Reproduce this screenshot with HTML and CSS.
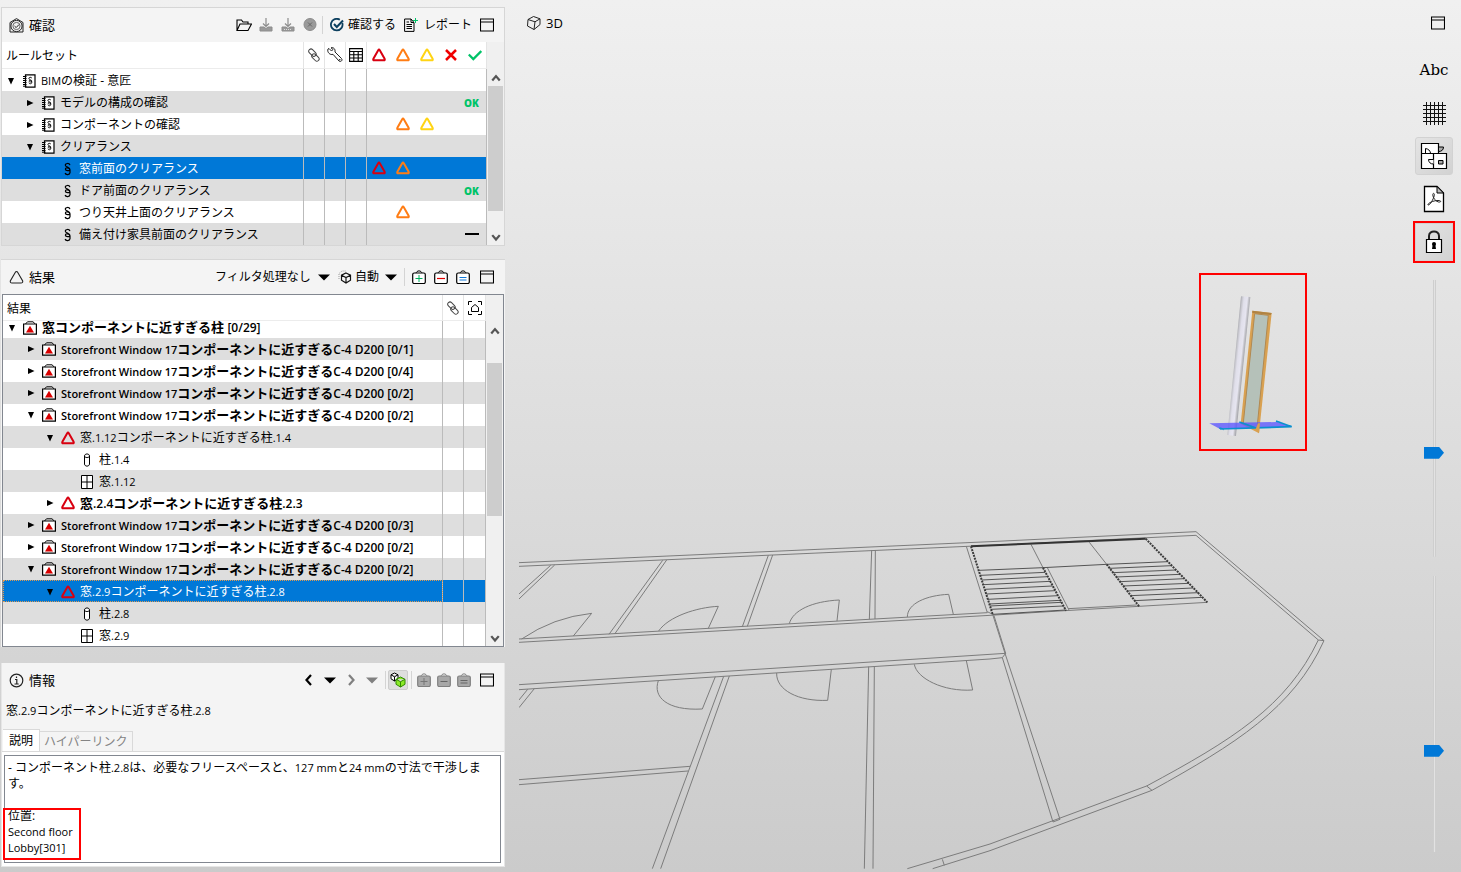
FILE: index.html
```html
<!DOCTYPE html>
<html lang="ja">
<head>
<meta charset="utf-8">
<title>BIMの検証</title>
<link rel="stylesheet" href="styles.css">
</head>
<body>
<svg class="defs" aria-hidden="true">
  <symbol id="tri" viewBox="0 0 14 14"><path d="M6.2 2.2Q7 1 7.8 2.2L12.6 10.8Q13.200 12.300 11.800 12.300H2.200Q.8 12.300 1.400 10.800Z" fill="none" stroke="currentColor" stroke-width="2"/></symbol>
  <symbol id="book" viewBox="0 0 14 14"><path d="M3.500 .8h9.500v12.400H3.500z" fill="#fff" stroke="#000" stroke-width="1.200"/><path d="M1 2.500h3.500M1 4.500h3.500M1 6.500h3.500M1 8.500h3.500M1 10.500h3.500M1 12.200h3.500" stroke="#000"/><path d="M9.900 4.200C9.300 2.800 6.700 3.100 6.900 4.700c.2 1.200 3 1 3 2.500 0 1.100-2.900 1-2.900-.1 0-1.100 2.600-.8 2.800 1.100.300 1.900-2.500 2-3 .6" fill="none" stroke="#000" stroke-width=".9"/></symbol>
  <symbol id="para" viewBox="0 0 14 14"><path d="M10 3.200C9.300.8 5.200 1 5.300 3.200c.1 2 4.800 2 4.700 4.300-.1 1.700-4.500 1.500-4.600-.4C5.300 5 9.800 5.600 10 8c0 .2 0 1.800 0 2.600-.2 2.500-4.300 2.700-4.900.4" fill="none" stroke="currentColor" stroke-width="1.200"/></symbol>
  <symbol id="case" viewBox="0 0 14 14"><path d="M2.500 3L4.500 .800h5.500L12.300 3" fill="none" stroke="#000"/><path d="M.600 3h12.800v10.200H.600z" fill="#fff" stroke="#000" stroke-width="1.200"/><path d="M7 4.800l4 6.700H3z" fill="#d80000"/></symbol>
  <symbol id="column" viewBox="0 0 14 14"><path d="M4.500 3v8c0 2.800 5 2.800 5 0V3c0-2.700-5-2.700-5 0c0 2 5 2 5 0" fill="#fff" stroke="#000"/></symbol>
  <symbol id="pane" viewBox="0 0 14 14"><path d="M1.500 .5h11v13h-11zM7 .5v13M1.500 7h11" fill="#fff" stroke="#000"/></symbol>
  <symbol id="win" viewBox="0 0 14 14"><path d="M.5 1h13v12H.5zM.5 4h13" fill="none" stroke="#000" stroke-width="1.100"/></symbol>
  <symbol id="link" viewBox="0 0 14 14"><g fill="none" stroke="#444" transform="rotate(45 7 7)"><rect x="0" y="4.200" width="8.500" height="4.500" rx="2.200"/><rect x="5.500" y="5.500" width="8.500" height="4.500" rx="2.200"/></g></symbol>
  <symbol id="caret" viewBox="0 0 12 7"><path d="M0 .5h12L6 6.500z" fill="currentColor"/></symbol>
  <symbol id="down" viewBox="0 0 8 8"><path d="M1 1h6L4 7.500z"/></symbol>
  <symbol id="right" viewBox="0 0 8 8"><path d="M1 1l6.500 3L1 7z"/></symbol>
  <symbol id="bag" viewBox="0 0 14 14"><path d="M4 3.500C4.500 0 9.500 0 10 3.500" fill="none" stroke="currentColor"/><rect x=".7" y="3" width="12.600" height="10.500" rx="1.500" fill="var(--fill,#fff)" stroke="currentColor" stroke-width="1.200"/></symbol>
  <symbol id="up-arrow" viewBox="0 0 8 8"><path d="M1 6l3-3.500L7 6" fill="none" stroke="#555" stroke-width="1.800"/></symbol>
  <symbol id="down-arrow" viewBox="0 0 8 8"><path d="M1 2.500L4 6l3-3.500" fill="none" stroke="#555" stroke-width="1.800"/></symbol>
</svg>

<div class="app">
<aside class="sidebar">

<section class="panel check-panel">
  <header class="bar">
    <svg class="i15" viewBox="0 0 15 15"><path d="M1 14V4.500L7.500 .600 14 4.500V14z" fill="none" stroke="#222"/><circle cx="7.500" cy="8" r="5.600" fill="#f4f4f4" stroke="#222"/><circle cx="7.500" cy="8" r="3.600" fill="none" stroke="#444" stroke-width=".8"/><path d="M5.500 8l1.700 1.600L10 6.500" fill="none" stroke="#222"/></svg>
    <h2>確認</h2>
    <div class="tools">
      <button class="tb" aria-label="開く"><svg class="i16" viewBox="0 0 16 16"><path d="M1 13.500V3h4.500l1.500 2h5v2M1 13.500L4 7h11.500l-3.500 6.500z" fill="none" stroke="#000" stroke-width="1.100"/></svg></button>
      <button class="tb dim" aria-label="追加"><svg class="i14" viewBox="0 0 14 14"><path d="M7 0v8M4 5.500L7 8.500l3-3" fill="none" stroke="#8c8c8c" stroke-width="1.200"/><path d="M1 9h4l2 1.500L9 9h4v4H1z" fill="#9a9a9a" stroke="#8c8c8c"/></svg></button>
      <button class="tb dim" aria-label="一括追加"><svg class="i14" viewBox="0 0 14 14"><path d="M7 0v8M4 5.500L7 8.500l3-3" fill="none" stroke="#8c8c8c" stroke-width="1.200"/><path d="M1 9h4l2 1.500L9 9h4v4H1z" fill="#9a9a9a" stroke="#8c8c8c"/><path d="M3 11.500h8" stroke="#ddd" stroke-dasharray="1 1"/></svg></button>
      <button class="tb dim" aria-label="削除"><svg class="i14" viewBox="0 0 14 14"><circle cx="7" cy="6.500" r="6" fill="#9a9a9a" stroke="#8c8c8c"/><path d="M5 4.500l4 4M9 4.500l-4 4" stroke="#666"/></svg></button>
      <span class="sep wide"></span>
      <button class="tx"><svg class="i14" viewBox="0 0 14 14"><path d="M12.300 5A5.800 5.800 0 1 1 9.800 1.700" fill="none" stroke="#0d405f" stroke-width="1.800"/><path d="M4 6l2.800 3L13 2.500" fill="none" stroke="#0d405f" stroke-width="2"/></svg>確認する</button>
      <button class="tx report"><svg class="i14" viewBox="0 0 14 14"><path d="M7 1H.600v12.400h9.400V5M7 1L10 4.500H7zM2.500 4h2.500M2.500 6.500h5.500M2.500 8.500h5.500M2.500 10.500h5.500" fill="none" stroke="#000"/><path d="M11.500 0v5M9 2.500h5" stroke="#00c368"/></svg>レポート</button>
      <button class="tb" aria-label="最大化"><svg class="i14"><use href="#win"/></svg></button>
    </div>
  </header>
  <div class="scroller">
  <table class="tree rules">
    <colgroup><col><col class="c21"><col class="c21"><col class="c21"><col class="c24"><col class="c24"><col class="c24"><col class="c24"><col class="c24"></colgroup>
    <thead><tr><th class="name" scope="col">ルールセット</th>
      <th><svg class="i14"><use href="#link"/></svg></th>
      <th><svg class="i16" viewBox="0 0 16 16"><path d="M2 1.500l2.500 2.500 1.500-1.500L4 .8C6.500 0 8.500 2 8 5l6.500 6.500c1.500 1.800-.8 4-2.500 2.500L6 7.300C3 8.500-.2 5 1 2z" fill="#fff" stroke="#222"/><circle cx="12.800" cy="12.800" r=".7"/></svg></th>
      <th><svg class="i14" viewBox="0 0 14 14"><path d="M.6.6h12.800v12.800H.6zM.6 3.500h12.800M.6 6.700h12.800M.6 10h12.800M4.800 3.500v10M9.200 3.500v10" fill="none" stroke="#000" stroke-width="1.100"/></svg></th>
      <th class="red"><svg class="i14"><use href="#tri"/></svg></th><th class="orange"><svg class="i14"><use href="#tri"/></svg></th><th class="yellow"><svg class="i14"><use href="#tri"/></svg></th>
      <th><svg class="i14" viewBox="0 0 14 14"><path d="M2 2l10 10M12 2L2 12" stroke="#f00000" stroke-width="2.500"/></svg></th>
      <th><svg class="i14" viewBox="0 0 14 14"><path d="M.8 6.500l4.500 4.500 8-8" fill="none" stroke="#00c368" stroke-width="2.300"/></svg></th></tr></thead>
    <tbody>
    <tr><td><div class="cell"><svg class="arw"><use href="#down"/></svg><svg class="i14"><use href="#book"/></svg><span><span class="en">BIM</span>の検証 - 意匠</span></div></td><td></td><td></td><td></td><td></td><td></td><td></td><td></td><td></td></tr>
    <tr><td><div class="cell lv1"><svg class="arw"><use href="#right"/></svg><svg class="i14"><use href="#book"/></svg>モデルの構成の確認</div></td><td></td><td></td><td></td><td></td><td></td><td></td><td></td><td class="ok">OK</td></tr>
    <tr><td><div class="cell lv1"><svg class="arw"><use href="#right"/></svg><svg class="i14"><use href="#book"/></svg>コンポーネントの確認</div></td><td></td><td></td><td></td><td></td><td class="orange"><svg class="i14"><use href="#tri"/></svg></td><td class="yellow"><svg class="i14"><use href="#tri"/></svg></td><td></td><td></td></tr>
    <tr><td><div class="cell lv1"><svg class="arw"><use href="#down"/></svg><svg class="i14"><use href="#book"/></svg>クリアランス</div></td><td></td><td></td><td></td><td></td><td></td><td></td><td></td><td></td></tr>
    <tr class="selected"><td><div class="cell lv2"><span class="arw"></span><svg class="i14 ink"><use href="#para"/></svg>窓前面のクリアランス</div></td><td></td><td></td><td></td><td class="red"><svg class="i14"><use href="#tri"/></svg></td><td class="orange"><svg class="i14"><use href="#tri"/></svg></td><td></td><td></td><td></td></tr>
    <tr><td><div class="cell lv2"><span class="arw"></span><svg class="i14 ink"><use href="#para"/></svg>ドア前面のクリアランス</div></td><td></td><td></td><td></td><td></td><td></td><td></td><td></td><td class="ok">OK</td></tr>
    <tr><td><div class="cell lv2"><span class="arw"></span><svg class="i14 ink"><use href="#para"/></svg>つり天井上面のクリアランス</div></td><td></td><td></td><td></td><td></td><td class="orange"><svg class="i14"><use href="#tri"/></svg></td><td></td><td></td><td></td></tr>
    <tr><td><div class="cell lv2"><span class="arw"></span><svg class="i14 ink"><use href="#para"/></svg>備え付け家具前面のクリアランス</div></td><td></td><td></td><td></td><td></td><td></td><td></td><td></td><td class="dash"><svg class="i14" viewBox="0 0 14 14"><path d="M0 7h14" stroke="#000" stroke-width="2"/></svg></td></tr>
    </tbody>
  </table>
  <div class="sb"><button aria-label="上へ"><svg class="i8"><use href="#up-arrow"/></svg></button><span class="thumb"></span><button aria-label="下へ"><svg class="i8"><use href="#down-arrow"/></svg></button></div>
  </div>
</section>

<section class="panel result-panel">
  <header class="bar">
    <svg class="i15" viewBox="0 0 15 15"><path d="M6.500 2Q7.500 1 8.500 2L13.700 11Q14 13 12 13H3Q1 13 1.300 11Z" fill="none" stroke="#222" stroke-width="1.100"/></svg>
    <h2>結果</h2>
    <div class="tools">
      <label class="drop"><select aria-label="フィルタ"><option>フィルタ処理なし</option></select><svg class="caret"><use href="#caret"/></svg></label>
      <label class="drop auto"><svg class="i14" viewBox="0 0 14 14"><path d="M1 9V3.500L4 1h4" fill="none" stroke="#999" stroke-dasharray="1 1"/><path d="M8 3l4.500 2.200v5L8 13l-4.500-2.800v-5zM3.500 5.200L8 7.500l4.500-2.300M8 7.500V13" fill="none" stroke="#111" stroke-width="1.200"/></svg><select aria-label="表示"><option>自動</option></select><svg class="caret"><use href="#caret"/></svg></label>
      <span class="sep tight"></span>
      <button class="tb" aria-label="追加"><svg class="i14" viewBox="0 0 14 14"><use href="#bag"/><path d="M3.500 8.500h7M7 5v7" stroke="#00b060"/></svg></button>
      <button class="tb" aria-label="除外"><svg class="i14" viewBox="0 0 14 14"><use href="#bag"/><path d="M3 8.500h8" stroke="#e00000" stroke-width="1.200"/></svg></button>
      <button class="tb bag-last" aria-label="設定"><svg class="i14" viewBox="0 0 14 14"><use href="#bag"/><path d="M3.500 7.500h7M3.500 10h7" stroke="#1078d8"/></svg></button>
      <button class="tb" aria-label="最大化"><svg class="i14"><use href="#win"/></svg></button>
    </div>
  </header>
  <div class="scroller framed">
  <table class="tree results">
    <colgroup><col><col class="c21"><col class="c22"></colgroup>
    <thead><tr><th class="name" scope="col">結果</th><th><svg class="i14"><use href="#link"/></svg></th><th><svg class="i14" viewBox="0 0 14 14"><path d="M.5 4V.5H4M10 .5h3.500V4M13.500 10v3.500H10M4 13.500H.5V10M3.500 10.500v-4L7 3.500l3.500 3v4z" fill="none" stroke="#000"/></svg></th></tr></thead>
    <tbody>
    <tr class="cut"><td><div class="cell bold"><svg class="arw"><use href="#down"/></svg><svg class="i14"><use href="#case"/></svg><span>窓コンポーネントに近すぎる柱 <span class="tag">[0/29]</span></span></div></td><td></td><td></td></tr>
    <tr><td><div class="cell lv1 bold"><svg class="arw"><use href="#right"/></svg><svg class="i14"><use href="#case"/></svg><span><span class="en">Storefront Window 17</span>コンポーネントに近すぎる<span class="tag">C-4 D200 [0/1]</span></span></div></td><td></td><td></td></tr>
    <tr><td><div class="cell lv1 bold"><svg class="arw"><use href="#right"/></svg><svg class="i14"><use href="#case"/></svg><span><span class="en">Storefront Window 17</span>コンポーネントに近すぎる<span class="tag">C-4 D200 [0/4]</span></span></div></td><td></td><td></td></tr>
    <tr><td><div class="cell lv1 bold"><svg class="arw"><use href="#right"/></svg><svg class="i14"><use href="#case"/></svg><span><span class="en">Storefront Window 17</span>コンポーネントに近すぎる<span class="tag">C-4 D200 [0/2]</span></span></div></td><td></td><td></td></tr>
    <tr><td><div class="cell lv1 bold"><svg class="arw"><use href="#down"/></svg><svg class="i14"><use href="#case"/></svg><span><span class="en">Storefront Window 17</span>コンポーネントに近すぎる<span class="tag">C-4 D200 [0/2]</span></span></div></td><td></td><td></td></tr>
    <tr><td><div class="cell lv2"><svg class="arw"><use href="#down"/></svg><svg class="i14 red"><use href="#tri"/></svg><span>窓<span class="en">.1.12</span>コンポーネントに近すぎる柱<span class="en">.1.4</span></span></div></td><td></td><td></td></tr>
    <tr><td><div class="cell lv3"><span class="arw"></span><svg class="i14"><use href="#column"/></svg><span>柱<span class="en">.1.4</span></span></div></td><td></td><td></td></tr>
    <tr><td><div class="cell lv3"><span class="arw"></span><svg class="i14"><use href="#pane"/></svg><span>窓<span class="en">.1.12</span></span></div></td><td></td><td></td></tr>
    <tr><td><div class="cell lv2 bold"><svg class="arw"><use href="#right"/></svg><svg class="i14 red"><use href="#tri"/></svg><span>窓<span class="tag">.2.4</span>コンポーネントに近すぎる柱<span class="tag">.2.3</span></span></div></td><td></td><td></td></tr>
    <tr><td><div class="cell lv1 bold"><svg class="arw"><use href="#right"/></svg><svg class="i14"><use href="#case"/></svg><span><span class="en">Storefront Window 17</span>コンポーネントに近すぎる<span class="tag">C-4 D200 [0/3]</span></span></div></td><td></td><td></td></tr>
    <tr><td><div class="cell lv1 bold"><svg class="arw"><use href="#right"/></svg><svg class="i14"><use href="#case"/></svg><span><span class="en">Storefront Window 17</span>コンポーネントに近すぎる<span class="tag">C-4 D200 [0/2]</span></span></div></td><td></td><td></td></tr>
    <tr><td><div class="cell lv1 bold"><svg class="arw"><use href="#down"/></svg><svg class="i14"><use href="#case"/></svg><span><span class="en">Storefront Window 17</span>コンポーネントに近すぎる<span class="tag">C-4 D200 [0/2]</span></span></div></td><td></td><td></td></tr>
    <tr class="selected focus"><td><div class="cell lv2"><svg class="arw"><use href="#down"/></svg><svg class="i14 red"><use href="#tri"/></svg><span>窓<span class="en">.2.9</span>コンポーネントに近すぎる柱<span class="en">.2.8</span></span></div></td><td></td><td></td></tr>
    <tr class="alt"><td><div class="cell lv3"><span class="arw"></span><svg class="i14"><use href="#column"/></svg><span>柱<span class="en">.2.8</span></span></div></td><td></td><td></td></tr>
    <tr><td><div class="cell lv3"><span class="arw"></span><svg class="i14"><use href="#pane"/></svg><span>窓<span class="en">.2.9</span></span></div></td><td></td><td></td></tr>
    </tbody>
  </table>
  <div class="sb"><button aria-label="上へ"><svg class="i8"><use href="#up-arrow"/></svg></button><span class="thumb mid"></span><button aria-label="下へ"><svg class="i8"><use href="#down-arrow"/></svg></button></div>
  </div>
</section>

<section class="panel info-panel">
  <header class="bar">
    <svg class="i15" viewBox="0 0 15 15"><circle cx="7.500" cy="7.500" r="6.300" fill="none" stroke="#222" stroke-width="1.200"/><path d="M6 6.500h1.800V11M5.500 11h4.200M7.500 3.500v1.500" fill="none" stroke="#222" stroke-width="1.200"/></svg>
    <h2>情報</h2>
    <div class="tools">
      <button class="nav" aria-label="戻る"><svg class="i12" viewBox="0 0 12 12"><path d="M8 1L3.500 6 8 11" fill="none" stroke="#000" stroke-width="2.200"/></svg></button>
      <button class="nav" aria-label="履歴"><svg class="caret"><use href="#caret"/></svg></button>
      <button class="nav dim" aria-label="進む"><svg class="i12" viewBox="0 0 12 12"><path d="M4 1l4.500 5L4 11" fill="none" stroke="#808080" stroke-width="2.200"/></svg></button>
      <button class="nav dim" aria-label="次の履歴"><svg class="caret"><use href="#caret"/></svg></button>
      <span class="sep thin"></span>
      <button class="toggle" aria-label="選択" aria-pressed="true"><svg class="i16" viewBox="0 0 16 16"><path d="M4.500 1L8 2.800v4L4.500 9 1 6.800v-4zM1 2.800l3.500 2L8 2.800M4.500 4.800V9" fill="#fff" stroke="#000"/><path d="M10.500 5l4.500 2.300v5L10.500 15 6 12.300v-5zM6 7.300l4.500 2.400L15 7.300M10.500 9.700V15" fill="#8bea28" stroke="#2f8a00"/></svg></button>
      <span class="sep thin"></span>
      <button class="nav dim bagbtn" aria-label="追加"><svg class="i14" viewBox="0 0 14 14"><use href="#bag"/><path d="M3.500 8.500h7M7 5v7" stroke="#777"/></svg></button>
      <button class="nav dim bagbtn" aria-label="除外"><svg class="i14" viewBox="0 0 14 14"><use href="#bag"/><path d="M3.500 8.500h7" stroke="#666"/></svg></button>
      <button class="nav dim bagbtn" aria-label="設定"><svg class="i14" viewBox="0 0 14 14"><use href="#bag"/><path d="M3.500 7.500h7M3.500 10h7" stroke="#666"/></svg></button>
      <button class="tb last" aria-label="最大化"><svg class="i14"><use href="#win"/></svg></button>
    </div>
  </header>
  <p class="subject">窓<span class="en">.2.9</span>コンポーネントに近すぎる柱<span class="en">.2.8</span></p>
  <div class="tabs" role="tablist"><button class="tab on" role="tab" aria-selected="true">説明</button><button class="tab" role="tab" aria-selected="false">ハイパーリンク</button></div>
  <div class="tabpage">
    <div class="note">
      <p>- コンポーネント柱<span class="en">.2.8</span>は、必要なフリースペースと、<span class="en">127 mm</span>と<span class="en">24 mm</span>の寸法で干渉しま<br>す。</p>
      <p class="place">位置:<br><span class="en">Second floor</span><br><span class="en">Lobby[301]</span><span class="mark"></span></p>
    </div>
  </div>
</section>
</aside>

<main class="viewer">
  <svg class="scene" viewBox="519 0 942 872" preserveAspectRatio="xMinYMin meet" role="img" aria-label="3Dモデル">
    <defs>
      <linearGradient id="pole" gradientUnits="userSpaceOnUse" x1="183" y1="109" x2="211" y2="112"><stop offset="0" stop-color="#aaaab0"/><stop offset=".15" stop-color="#c6c6cd"/><stop offset=".35" stop-color="#e0dfea"/><stop offset=".7" stop-color="#e6e5f0"/><stop offset=".85" stop-color="#c4c4ca"/><stop offset="1" stop-color="#aaaab0"/></linearGradient>
    </defs>
    <g class="walls" transform="translate(510 520) scale(.33333)">
      <path d="M27 128L1440 65M27 139L1440 76M122 136L27 222M134 135L27 237M458 121L297 343M470 120L314 342M775 106L697 320M788 105L712 319M1085 91L1078 298M1096 91L1095 297M1369 79L1432 278M27 357L1432 278M27 367L1440 286M27 494L1440 403M27 509L1440 417M53 508L27 540M73 506L27 563M641 469L427 1046M658 468L452 1046M1076 440L1063 1046M1093 439L1089 1046M27 779L540 739M27 794L534 753M1440 972L1192 1046M1440 992L1268 1046M1297 1018L1303 1036"/>
      <path d="M35 357Q130 292 245 280L190 348M446 333C475 290 560 262 625 259L595 325M838 311C848 272 905 244 988 240L981 303M1192 291C1192 250 1250 226 1316 223L1330 283M445 482C428 530 470 573 577 567L616 470M800 459C798 510 865 545 953 541L964 448M1213 433C1220 475 1300 516 1388 510L1369 422"/>
    </g>
    <g class="walls" transform="translate(960 520) scale(.33333)">
      <path d="M90 65L708 35L1092 362L1075 360L708 46L90 76M1075 360C980 560 816 660 560 798L90 972M1092 362C1000 565 826 672 576 811L90 992M560 798L576 811M90 286L315 272L742 247M98 283L135 400L300 898L279 906L127 413L137 400L90 403M102 287L137 400M127 413L90 417M82 275L98 283M213 73L249 143M388 67L440 133M262 143L327 270M324 266L530 255"/>
    </g>
    <g class="stairs" transform="translate(960 520) scale(.33333)">
      <path d="M58 151L249 143M62 166L256 157M67 180L263 170M71 194L271 184M75 208L278 198M80 222L286 212M84 238L294 227M88 252L301 241M90 258L304 247M93 268L310 258M98 283L318 270M440 133L624 125M449 145L635 137M459 158L648 150M469 171L661 163M480 185L673 176M490 198L687 190M502 213L700 204M512 227L714 218M524 242L727 232M249 143L440 133"/>
      <path class="heavy" d="M33 79L557 56"/>
      <path class="rails" d="M33 79L98 283M557 56L742 247M249 143L318 272M440 133L538 260"/>
    </g>
    <g transform="translate(1180 260) scale(.33333)">
      <path d="M183 109L211 111L168 528L142 525Z" fill="url(#pole)"/>
      <path d="M217 152L275 159L237 520L182 491Z" fill="#d9a151"/>
      <path d="M217 152L275 159L272 165L217 159Z" fill="#b08343"/>
      <path d="M224 161L265 166L231 505L190 489Z" fill="#b5c1b9" stroke="#b18a52" stroke-width="3"/>
      <path d="M88 490L292 486L335 500L120 507Z" fill="#5c56ff" opacity=".78"/>
      <path d="M120 507L335 500L288 483M178 486L228 504M118 504L132 508" fill="none" stroke="#0a90cf" stroke-width="5"/>
      <path d="M228 505L237 520L240 490L234 490Z" fill="#d9a151"/>
      <rect x="60" y="42" width="318" height="528" fill="none" stroke="#f00" stroke-width="6"/>
    </g>
  </svg>
  <header class="vtitle"><svg class="i16" viewBox="0 0 16 16"><path d="M2 4.500L7.500 1.500l6.500 2.300v5.800L8 14.500 1.500 11zM2 4.500l7 2.300 5-3M9 6.800L8 14.500" fill="none" stroke="#222"/></svg><h2>3D</h2></header>
  <nav class="rail">
    <button class="tb max" aria-label="最大化"><svg class="i14"><use href="#win"/></svg></button>
    <button class="big abc">Abc</button>
    <button class="big" aria-label="グリッド"><svg class="i24" viewBox="0 0 24 24"><path d="M4.500 1v23M8.500 1v23M12.500 1v23M16.500 1v23M20.500 1v23M1 4.500h23M1 8.500h23M1 12.500h23M1 16.500h23M1 20.500h23" stroke="#111"/></svg></button>
    <button class="big pressed" aria-label="平面図" aria-pressed="true"><svg class="i28" viewBox="0 0 28 28"><path d="M1.500 1.500h17v10h8v15h-25zM1.500 11.500h17M13.500 11.500v15" fill="#fff" stroke="#000" stroke-width="1.200"/><path d="M5.500 11V6.500C8.500 7 10 8.500 10.500 11" fill="#fff" stroke="#000"/><path d="M18.500 5h5c0 3-2 4.500-5 4.500z" fill="#aaa" stroke="#000"/><path d="M13.500 17.500h-5c.2 3 2 4.500 5 4.500" fill="#fff" stroke="#000"/><path d="M18.500 18.500h4.500v3.500h-4.500z" fill="#aaa" stroke="#000"/></svg></button>
    <button class="big" aria-label="PDF"><svg class="i28" viewBox="0 0 28 28"><path d="M4.500 1.500H17l6.500 6.500v18.500h-19z" fill="#fff" stroke="#000" stroke-width="1.300"/><path d="M17 1.500V8h6.500z" fill="#bbb" stroke="#000"/><path d="M8 20c-.8-1.500 5-4.500 10-4.500 4 0 3 2 .5 1.500-3-.7-5.500-4-5.700-7 0-2.500 2-2 1.500.5C13.500 14 10 20.500 8 20z" fill="none" stroke="#222"/></svg></button>
    <button class="big pressed lock" aria-label="ロック" aria-pressed="true"><svg class="i24" viewBox="0 0 24 24"><path d="M7 10V6c0-6 10-6 10 0v4" fill="none" stroke="#222" stroke-width="2"/><path d="M4.500 9.500h15v13h-15z" fill="#fff" stroke="#000" stroke-width="1.200"/><circle cx="12" cy="14" r="2"/><path d="M10.800 14h2.400l.8 5h-4z"/></svg></button>
    <input class="vslider" type="range" min="0" max="100" value="63" aria-label="上限">
    <input class="vslider" type="range" min="0" max="100" value="64" aria-label="下限">
  </nav>
</main>
</div>
</body>
</html>
```
FILE: styles.css
```css
* { box-sizing: border-box; }
body {
  margin: 0;
  font: 12px/16px "Open Sans", "Noto Sans CJK JP", sans-serif;
  color: #000;
}
button, select, input { font: inherit; color: inherit; margin: 0; }
button { border: 0; padding: 0; background: none; display: flex; align-items: center; justify-content: center; }
h2 { margin: 0; font-size: 13px; font-weight: 400; line-height: 16px; }
p { margin: 0; }
svg { display: block; flex: none; }
.defs { position: absolute; width: 0; height: 0; }

.en { font-size: 11px; }
.tag { font-size: 12px; }
.i8 { width: 10px; height: 10px; }
.i12 { width: 12px; height: 12px; }
.i14 { width: 14px; height: 14px; }
.i15 { width: 15px; height: 15px; }
.i16 { width: 16px; height: 16px; }
.i24 { width: 24px; height: 24px; }
.i28 { width: 28px; height: 28px; }
.red { color: #d80010; }
.orange { color: #ff7d14; }
.yellow { color: #ffd414; }

.app {
  display: flex;
  gap: 14px;
  min-height: 100vh;
  background: linear-gradient(#f0f0f0, #cbcbcb);
}
.sidebar {
  flex: 0 0 505px;
  display: flex;
  flex-direction: column;
  padding: 7px 0 5px 1px;
}
.panel { border: 1px solid #d6d6d6; background: #f4f4f4; }
.check-panel { margin-bottom: 13px; }
.result-panel { margin-bottom: 16px; border-width: 1px 0 0; }
.info-panel { flex: 1; display: flex; flex-direction: column; border-color: #e6e6e6; border-top: 0; }

.bar { display: flex; align-items: center; height: 34px; padding: 0 6px 0 7px; gap: 5px; }
.result-panel .bar { padding: 0 7px 0 8px; }
.tools { display: flex; align-items: center; margin-left: auto; }
.tb { width: 22px; height: 22px; }
.tx { gap: 4px; margin-right: 8px; white-space: nowrap; }
.tx.report { gap: 6px; margin-right: 4px; }
.dim { color: #808080; --fill: #a8a8a8; }
.sep { width: 1px; height: 18px; background: #d4d4d4; }
.sep.wide { margin: 0 7px 0 1px; }
.sep.tight { margin: 0 3px 0 7px; }
.sep.thin { margin: 0 2px 0 3px; }
.bag-last { margin-right: 2px; }
.drop { display: flex; align-items: center; gap: 6px; margin-right: 8px; }
.drop select { appearance: none; border: 0; padding: 0; background: none; }
.drop.auto { gap: 3px; margin-right: 0; }
.drop.auto .caret { margin-left: 2px; }
.caret { width: 12px; height: 7px; }
.nav { width: 21px; height: 20px; }
.nav.bagbtn { width: 20px; }
.tb.last { margin-left: 2px; }
.toggle { width: 20px; height: 20px; border: 1px solid #ccc; border-radius: 2px; background: #dedede; }

.scroller { display: flex; background: #f0f0f0; }
.framed { border: 1px solid #828790; margin: 0 1px; }
.tree { flex: 1; border-collapse: separate; border-spacing: 0; table-layout: fixed; width: 0; }
.c21 { width: 21px; }
.c22 { width: 22px; }
.c24 { width: 24px; }
.tree th, .tree td { padding: 0; border-right: 1px solid #bbb; }
.tree th { height: 27px; background: #fff; border-right-color: #e4e4e4; border-bottom: 1px solid #ececec; font-weight: 400; }
.results th { height: 26px; }
.tree th.name { text-align: left; padding: 2px 0 0 4px; }
.tree th svg, .tree td > svg { margin: 0 auto; }
.tree td { height: 22px; }
.rules th:nth-child(n+5):not(:last-child), .rules td:nth-child(n+5):not(:last-child) { border-right: 0; }
.tree tbody tr { background: #fff; }
.tree tbody tr:nth-child(even) { background: #dedede; }
.tree tbody tr.selected { background: #0078d7; color: #fff; }
.focus td:first-child { outline: 1px dotted #e09a50; outline-offset: -1px; }
.cell { display: flex; align-items: center; gap: 5px; white-space: nowrap; overflow: hidden; height: 22px; padding-top: 2px; }
.arw { width: 8px; height: 8px; margin: 0 2px 0 5px; flex: none; fill: #000; }
.ink { color: #000; }
.lv1 { padding-left: 19px; }
.lv2 { padding-left: 38px; }
.lv3 { padding-left: 57px; }
.bold { font-size: 13px; font-weight: 700; padding-top: 0; }
.bold .en, .bold .tag { font-weight: 600; }
.tree .cut td { height: 17px; }
.cut .cell { height: 13px; margin-bottom: 4px; overflow: visible; }
.tree td.ok { color: #00c368; font: 800 10px/16px "Open Sans", sans-serif; text-align: center; padding: 2px 6px 0 0; }
.tree td.dash { padding-right: 6px; }
.sb { width: 17px; display: flex; flex-direction: column; align-items: stretch; padding-top: 27px; }
.sb button { height: 17px; }
.thumb { flex: 0 1 125px; background: #cdcdcd; margin: 0 1px; }
.sb .thumb + button { margin-top: auto; }
.thumb.mid { flex-basis: 153px; margin-top: 24px; }

.subject { padding: 6px 4px 10px; }
.tabs { display: flex; align-items: flex-end; padding-left: 1px; }
.tab { height: 20px; padding: 0 4px; border: 1px solid #d9d9d9; border-width: 1px 1px 0 0; color: #848484; }
.tab.on { height: 22px; padding: 0 6px; background: #fff; color: #000; }
.tabpage { flex: 1; display: flex; background: #fff; border-top: 1px solid #d9d9d9; padding: 3px 3px 3px 2px; }
.note { flex: 1; border: 1px solid #828790; padding: 4px 8px 4px 3px; }
.place { position: relative; width: max-content; margin-top: 16px; }
.mark { position: absolute; inset: 0 -8px -4px -5px; border: 2px solid #f00; }

.viewer { flex: 1; position: relative; display: flex; justify-content: space-between; min-width: 0; }
.scene { position: absolute; inset: 0; width: 100%; height: 100%; }
.walls path, .stairs path { fill: none; stroke: #7c7c7c; stroke-width: 1px; vector-effect: non-scaling-stroke; }
.stairs path { stroke: #555; }
.stairs .heavy { stroke: #333; stroke-width: 2px; }
.stairs .rails { stroke: #3c3c3c; stroke-width: 2px; stroke-dasharray: 2px 1px; }
.vtitle { position: relative; display: flex; align-items: center; gap: 4px; height: 16px; margin: 15px 0 0 7px; }
.rail { position: relative; display: flex; flex-direction: column; align-items: center; width: 38px; margin-right: 8px; padding: 12px 0 20px; gap: 5px; }
.rail .max { margin: 0 0 12px 7px; }
.big { width: 38px; height: 38px; border-radius: 3px; }
.abc { font: 15px/16px "DejaVu Serif", serif; }
.pressed { border: 1px solid #d2d2d2; background: linear-gradient(135deg, #e4e4e4, #d2d2d2); }
.lock { outline: 2px solid #f00; border-radius: 0; }
.vslider {
  appearance: none;
  writing-mode: vertical-lr;
  flex: 1;
  min-height: 0;
  width: 20px;
  margin-top: 14px;
  background: linear-gradient(#e2e2e2, #e2e2e2) center / 1px 100% no-repeat, linear-gradient(#cecece, #cecece) center / 3px 100% no-repeat;
}
.vslider::-webkit-slider-thumb {
  appearance: none;
  width: 20px;
  height: 12px;
  background: #0078d7;
  clip-path: polygon(0 0, 75% 0, 100% 50%, 75% 100%, 0 100%);
}
```
